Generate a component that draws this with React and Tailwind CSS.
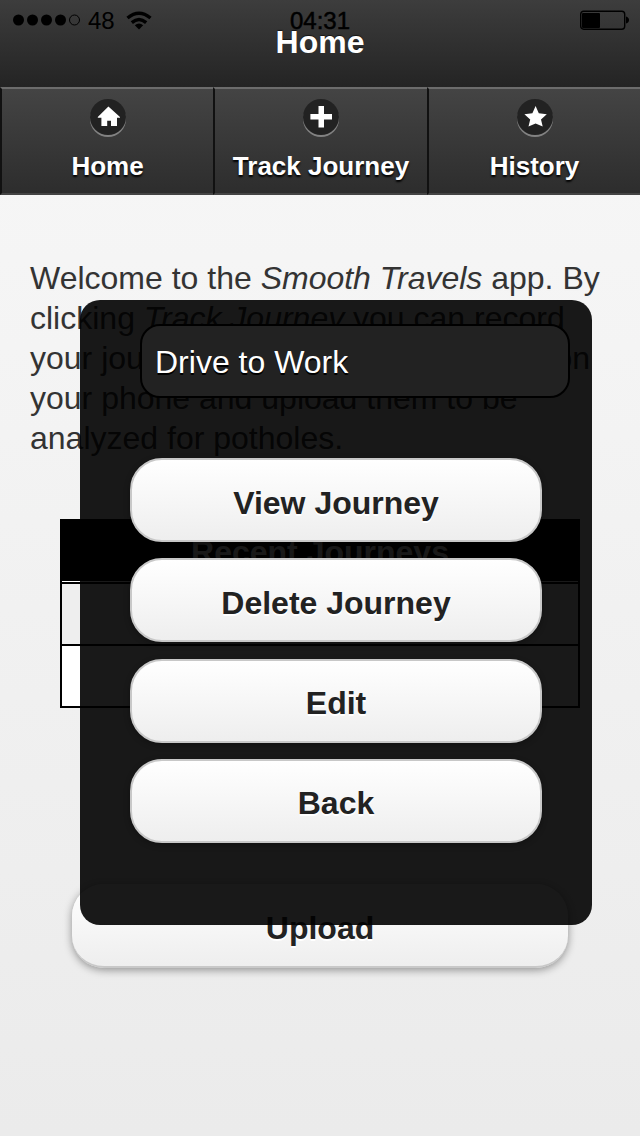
import React from 'react';

const tabs = [
  { label: 'Home', icon: 'home' },
  { label: 'Track Journey', icon: 'plus' },
  { label: 'History', icon: 'star' },
];

function TabIcon({ name }) {
  return (
    <div className="h-9 w-9 rounded-full bg-[#222222] shadow-[0_2px_0_#828282]">
      <svg viewBox="0 0 36 36" className="h-9 w-9" fill="#fff">
        {name === 'home' && <path d="M18.4 7.5 L30 18 V18.8 H27 V27 H21 V21.7 H17.2 V27 H11.4 V18.8 H7.8 V18 Z" />}
        {name === 'plus' && <path d="M15.5 7 H21 V15 H29 V20.6 H21 V28.4 H15.5 V20.6 H7.4 V15 H15.5 Z" />}
        {name === 'star' && <path d="M18.6 7 L21.8 14.2 L29.8 15.3 L24 20.5 L25.7 27.4 L18.6 24.4 L11.5 27.4 L13.2 20.5 L7.4 15.3 L15.4 14.2 Z" />}
      </svg>
    </div>
  );
}

function StatusBar() {
  return (
    <div className="absolute inset-x-0 top-0 flex h-10 items-center justify-between pl-[13px] pr-[11px] text-2xl text-black">
      <div className="flex items-center">
        <svg width="68" height="12" viewBox="0 0 68 12">
          <circle cx="5.5" cy="6" r="5.5" />
          <circle cx="19.5" cy="6" r="5.5" />
          <circle cx="33.5" cy="6" r="5.5" />
          <circle cx="47.5" cy="6" r="5.5" />
          <circle cx="61.5" cy="6" r="5" fill="none" stroke="#000" />
        </svg>
        <span className="ml-[7px] mt-0.5">48</span>
        <svg className="ml-[11px] mt-px" width="26" height="19" viewBox="0 0 26 19" fill="none" stroke="#000" strokeWidth="3.4">
          <path d="M1.5 7 Q13 -2.6 24.5 7" />
          <path d="M5.8 11.6 Q13 5.4 20.2 11.6" />
          <path d="M8.8 14.2 Q13 11 17.2 14.2 L13 18.5 Z" fill="#000" stroke="none" />
        </svg>
      </div>
      <svg width="49" height="20" viewBox="0 0 49 20">
        <rect x="0.7" y="1.2" width="44" height="18" rx="3" fill="none" stroke="#000" strokeWidth="1.4" />
        <rect x="2" y="3" width="18" height="15" rx="1" />
        <path d="M46 6.5 Q49 7.5 49 10 T46 13.5 Z" />
      </svg>
      <span className="absolute left-1/2 top-[5px] -translate-x-1/2 leading-8 [-webkit-text-stroke:0.5px_#000]">04:31</span>
    </div>
  );
}

function PopupButton({ children }) {
  return (
    <button className="flex h-[84px] w-full items-center justify-center rounded-[32px] border-2 border-[#c8c8c8] bg-linear-to-b from-white to-[#eeeeee] pt-[5px] text-[32px] font-bold text-[#222] shadow-[0_2px_6px_rgba(0,0,0,0.3)] [text-shadow:0_2px_0_#fff]">
      {children}
    </button>
  );
}

export default function App() {
  return (
    <div className="relative flex h-[1136px] w-[640px] flex-col overflow-hidden bg-linear-to-b from-[#f8f8f8] to-[#ebebeb] font-['Liberation_Sans',Arial,sans-serif] text-[#333]">
      <header className="relative h-[87px] shrink-0 bg-linear-to-b from-[#3d3d3d] to-[#242424]">
        <StatusBar />
        <h1 className="relative pt-[22px] text-center text-[32px] leading-10 font-bold text-white [text-shadow:0_-1px_1px_rgba(0,0,0,0.6)]">Home</h1>
      </header>
      <nav className="grid h-[108px] shrink-0 grid-cols-[213px_214px_213px] bg-[#222]">
        {tabs.map((tab) => (
          <div key={tab.label} className="flex flex-col items-center border-t-2 border-b-2 border-l-2 border-t-[#6c6c6c] border-b-[#444] border-l-[#111] bg-linear-to-b from-[#444] to-[#2d2d2d] pt-[10px]">
            <TabIcon name={tab.icon} />
            <span className="mt-[15px] whitespace-nowrap text-[26px] leading-8 font-bold text-white [text-shadow:0_2px_2px_#000]">{tab.label}</span>
          </div>
        ))}
      </nav>

      <main className="flex grow flex-col pt-[63px]">
        <p className="ml-[30px] w-[580px] whitespace-nowrap text-[32px] leading-10 [text-shadow:0_2px_0_#f3f3f3]">
          Welcome to the <i>Smooth Travels</i> app. By<br />
          clicking <i>Track Journey</i> you can record
          <span className="flex w-[560px] justify-between"><span>your journeys</span><span>on</span></span>
          your phone and upload them to be<br />
          analyzed for potholes.
        </p>
        <div className="mx-[60px] mt-[61px] flex h-[189px] flex-col border-2 border-black bg-white">
          <div className="flex h-[60px] items-center justify-center bg-black pt-0.5 text-[32px] font-bold text-white">Recent Journeys</div>
          <div className="mt-px h-16 border-y-2 border-black bg-[#eeeeee]" />
          <div className="grow bg-white" />
        </div>
        <button className="mt-[176px] ml-[72px] flex h-[84px] w-[496px] items-center justify-center rounded-[32px] border-b-2 border-[#c8c8c8] bg-linear-to-b from-white to-[#eeeeee] pt-[6px] text-[32px] font-bold text-[#222] shadow-[0_2px_8px_rgba(0,0,0,0.4)] [text-shadow:0_2px_0_#fff]">
          Upload
        </button>
      </main>

      <section className="absolute left-20 top-[300px] flex h-[625px] w-[512px] flex-col rounded-[20px] bg-black/90 px-[50px] pt-6">
        <div className="ml-[10px] flex h-[74px] w-[430px] shrink-0 items-center rounded-[20px] border-2 border-black bg-[#222] pl-[13px] pt-[2px] text-[32px] text-white [text-shadow:0_2px_0_#000]">
          Drive to Work
        </div>
        <div className="mt-[60px] flex flex-col gap-[16.3px]">
          <PopupButton>View Journey</PopupButton>
          <PopupButton>Delete Journey</PopupButton>
          <PopupButton>Edit</PopupButton>
          <PopupButton>Back</PopupButton>
        </div>
      </section>
    </div>
  );
}
